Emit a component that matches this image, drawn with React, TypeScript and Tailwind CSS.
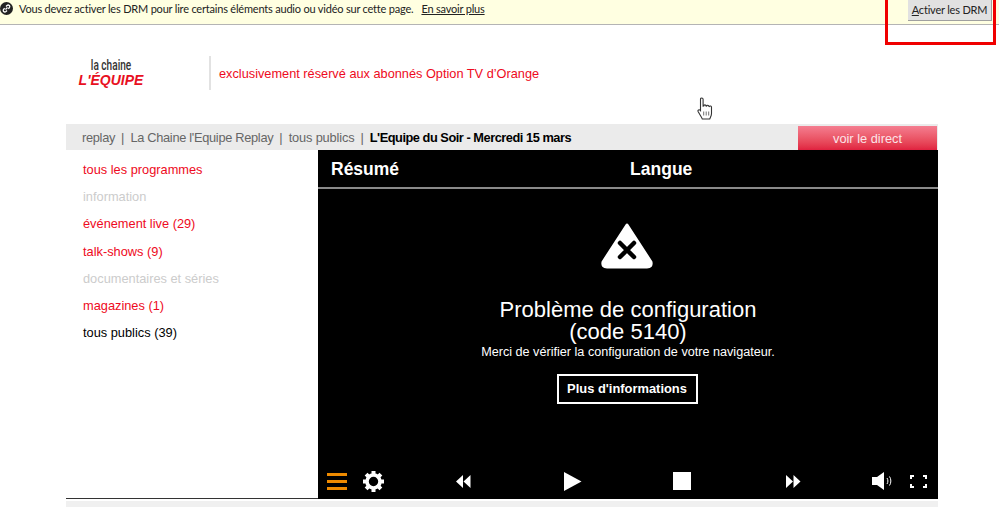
const categories = [
  { label: 'tous les programmes', color: 'text-[#ee0a22]' },
  { label: 'information', color: 'text-[#cccccc]' },
  { label: 'événement live (29)', color: 'text-[#ee0a22]' },
  { label: 'talk-shows (9)', color: 'text-[#ee0a22]' },
  { label: 'documentaires et séries', color: 'text-[#cccccc]' },
  { label: 'magazines (1)', color: 'text-[#ee0a22]' },
  { label: 'tous publics (39)', color: 'text-black' },
]

function HandCursor() {
  return (
    <svg className="absolute left-[697px] top-[97px]" width="16" height="24" viewBox="0 0 16 24" fill="#fff" stroke="#333" strokeWidth="1.1">
      <path d="M3.5 2.2c0-1.6 2.6-1.6 2.6 0v7l.6-.1c0-1.6 2.3-1.6 2.4 0l.5.1c.2-1.3 2.2-1.2 2.3.2l.4.2c.4-1 2.2-.8 2.2.7v6.2c0 2.400-1.300 3.900-1.800 5.500H5.300C4.500 20 2.500 17.300 1.200 14.800c-.8-1.700.9-2.800 2.300-1.300z" />
      <path d="M6.700 14.500v4M9.200 14.500v4M11.700 14.500v4" strokeWidth="0.7" />
    </svg>
  )
}

function GearIcon() {
  return (
    <svg className="ml-[15px]" width="23" height="23" viewBox="0 0 23 23" fill="none" stroke="#fff">
      <circle cx="11.500" cy="11.500" r="6.500" strokeWidth="3.600" />
      <path d="M11.500 1v3.500M11.500 18.500V22M1 11.500h3.500M18.500 11.500H22M4.100 4.100l2.500 2.500M16.400 16.400l2.500 2.500M18.900 4.100l-2.500 2.500M6.600 16.400l-2.500 2.500" strokeWidth="4" />
    </svg>
  )
}

function PlayerControls() {
  return (
    <div className="mt-auto h-[36px] pl-2 pr-[11px] flex items-center shrink-0">
      <div className="w-5 h-[17px] ml-[1px] flex flex-col justify-between">
        <div className="h-[3px] bg-[#ee8a00]" />
        <div className="h-[3px] bg-[#ee8a00]" />
        <div className="h-[3px] bg-[#ee8a00]" />
      </div>
      <GearIcon />
      <svg className="ml-[71px]" width="15" height="13" viewBox="0 0 15 13" fill="#fff">
        <path d="M7 0v13L0 6.500zM14.500 0v13L7.500 6.500z" />
      </svg>
      <svg className="ml-[93px]" width="18" height="19" viewBox="0 0 18 19" fill="#fff">
        <path d="M0 0l17.500 9.500L0 19z" />
      </svg>
      <div className="ml-[91px] w-[18px] h-[18px] bg-white" />
      <svg className="ml-[95px]" width="15" height="13" viewBox="0 0 15 13" fill="#fff">
        <path d="M0 0l7 6.500L0 13zM7.500 0l7 6.500-7 6.500z" />
      </svg>
      <svg className="ml-[71px]" width="21" height="18" viewBox="0 0 21 18" fill="#fff">
        <path d="M0 5h5l7-5v18l-7-5H0z" />
        <path d="M15 6c1.200 1.700 1.200 4.300 0 6M17.500 4.500c1.800 2.500 1.800 6.500 0 9" fill="none" stroke="#fff" strokeWidth="1" />
      </svg>
      <svg className="ml-[17px]" width="17" height="13" viewBox="0 0 17 13" fill="none" stroke="#fff" strokeWidth="2">
        <path d="M1 4V1h3M13 1h3v3M16 9v3h-3M4 12H1V9" />
      </svg>
    </div>
  )
}

export default function App() {
  return (
    <div className="relative w-[999px] h-[507px] overflow-hidden bg-white font-['Liberation_Sans',Arial,sans-serif]">
      {/* DRM notification */}
      <div className="h-[25px] bg-[#ffffe1] border-b border-[#b4b4b4] flex items-start font-['Lato',sans-serif] text-[11px] tracking-[-0.2px] text-[#222]">
        <div className="mt-[2px] w-[13px] h-[13px] rounded-full bg-[#222] flex items-center justify-center">
          <svg width="9" height="9" viewBox="0 0 9 9" fill="none" stroke="#fff" strokeWidth="1.300">
            <path d="M4 2.500l1-1c.7-.6 1.700-.6 2.300 0s.6 1.600 0 2.200l-1 1M5 6.500l-1 1c-.7.6-1.700.6-2.300 0s-.6-1.600 0-2.200l1-1M3.500 5.500l2-2" />
          </svg>
        </div>
        <span className="ml-[6px] mt-[1px] leading-[16px] whitespace-nowrap">Vous devez activer les DRM pour lire certains éléments audio ou vidéo sur cette page.</span>
        <span className="ml-[8px] mt-[1px] leading-[16px] underline whitespace-nowrap">En savoir plus</span>
        <button className="ml-auto mr-[7px] w-[84px] h-[21px] bg-[#e1e1e1] border-r border-b border-[#a0a0a0] text-[#222] leading-[18px] whitespace-nowrap">
          <span className="underline">A</span>ctiver les DRM
        </button>
      </div>

      <div className="ml-[66px] w-[872px]">
        {/* Logo and notice */}
        <div className="h-[99px] flex items-start">
          <div className="w-[143px] pt-[33px]">
            <div className="w-[90px] flex flex-col items-center">
              <span className="font-['Roboto',sans-serif] font-medium text-[14px] leading-[15px] text-[#333] scale-x-[0.72] whitespace-nowrap">la chaine</span>
              <span className="font-['Liberation_Sans',sans-serif] text-[14px] leading-[14px] font-bold italic text-[#e8101f] whitespace-nowrap">L'ÉQUIPE</span>
            </div>
          </div>
          <div className="mt-[31px] w-[2px] h-[34px] bg-[#e2e2e2]" />
          <p className="mt-[41px] ml-[8px] text-[12.750px] leading-[16px] text-[#ee0a22]">exclusivement réservé aux abonnés Option TV d’Orange</p>
        </div>

        {/* Breadcrumb */}
        <div className="h-[26px] bg-[#ebebeb] flex items-center text-[12.800px] text-[#666]">
          <div className="flex-1 pl-4 pt-[2px] whitespace-nowrap">
            <span className="tracking-[-0.3px]">replay</span>
            <span className="mx-[6px]">|</span>
            <span className="tracking-[-0.3px]">La Chaine l'Equipe Replay</span>
            <span className="mx-[6px]">|</span>
            <span className="tracking-[-0.15px]">tous publics</span>
            <span className="mx-[6px]">|</span>
            <span className="font-bold text-black tracking-[-0.47px]">L'Equipe du Soir - Mercredi 15 mars</span>
          </div>
          <div className="w-[139px] mr-[1px] h-[24px] mt-[2px] bg-gradient-to-b from-[#f47d90] to-[#e0203f] text-[#fbe4e8] text-center leading-[25px]">voir le direct</div>
        </div>

        {/* Content */}
        <div className="flex h-[349px]">
          <aside className="w-[252px] h-[349px] border-b border-[#333] pl-[17px] pt-[12px] flex flex-col gap-[10.700px] text-[12.800px] leading-[16.500px]">
            {categories.map((c) => (
              <span key={c.label} className={c.color}>{c.label}</span>
            ))}
          </aside>
          <div className="w-[620px] h-[349px] bg-black flex flex-col">
            <div className="h-[39px] pt-[1px] border-b-2 border-[#8a8a8a] flex items-center text-white font-bold text-[17.500px] shrink-0">
              <span className="ml-[13px]">Résumé</span>
              <span className="ml-[231px]">Langue</span>
            </div>
            <div className="flex flex-col items-center text-white">
              <svg className="mt-[32px] mr-[2px]" width="54" height="48" viewBox="0 0 54 48">
                <path d="M27 4 L51 41 Q52 46 47 46 L7 46 Q2 46 3 41 Z" fill="#fff" stroke="#fff" strokeWidth="3" strokeLinejoin="round" />
                <path d="M20 22l14 14M34 22L20 36" stroke="#000" strokeWidth="4.500" strokeLinecap="round" />
              </svg>
              <div className="mt-[30px] text-[22px] leading-[22px] text-center">Problème de configuration<br />(code 5140)</div>
              <div className="text-[12.650px] leading-[14px] mt-[2px]">Merci de vérifier la configuration de votre navigateur.</div>
              <div className="mt-[15px] mr-[2px] w-[141px] h-[30px] border-2 border-white font-bold text-[12.900px] flex items-center justify-center">Plus d'informations</div>
            </div>
            <PlayerControls />
          </div>
        </div>
        <div className="h-[6px] mt-[2px] bg-[#f0f0f0]" />
      </div>

      {/* Annotation and pointer on top of the page */}
      <div className="absolute left-[885px] top-[-4px] w-[111px] h-[49px] border-[3px] border-[#f00000]" />
      <HandCursor />
    </div>
  )
}
